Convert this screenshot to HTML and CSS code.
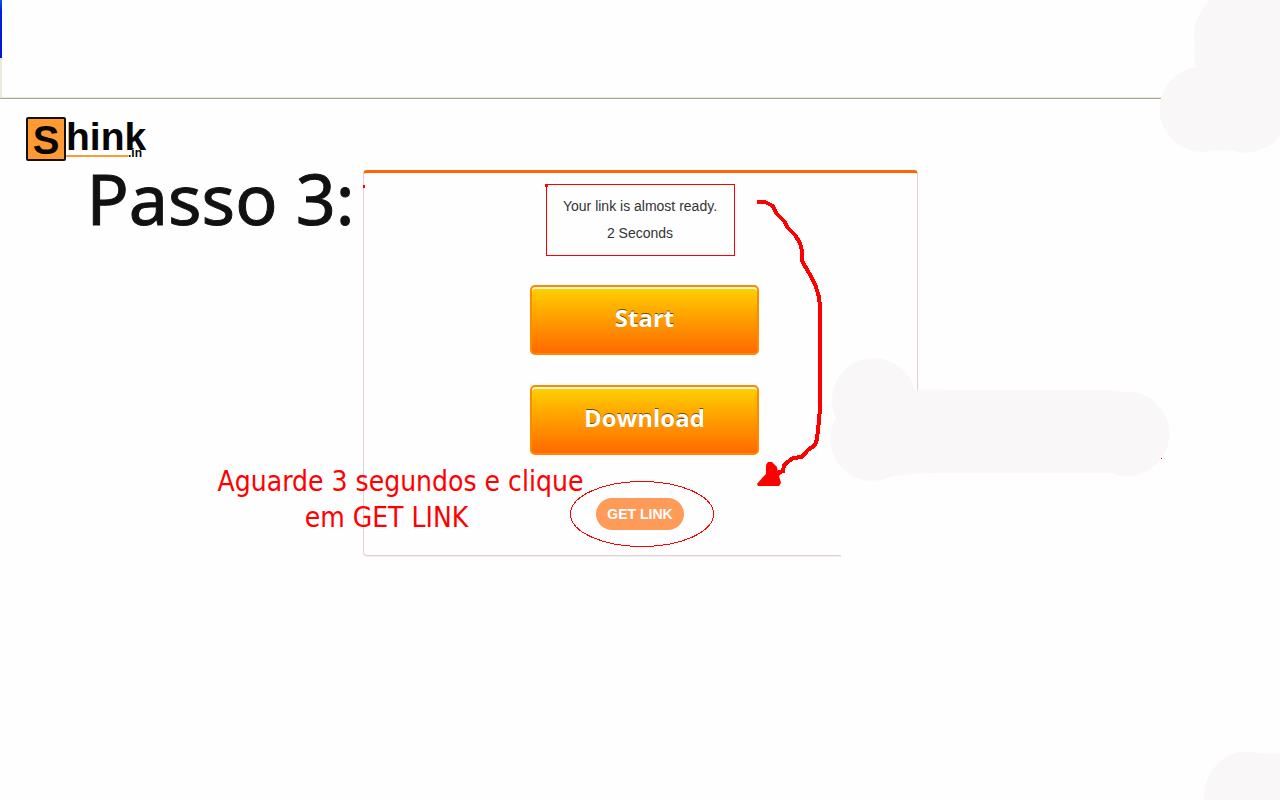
FILE: index.html
```html
<!DOCTYPE html>
<html lang="pt">
<head>
<meta charset="utf-8">
<title>Shink.in</title>
<link rel="stylesheet" href="styles.css">
</head>
<body>
<header class="topbar">
  <svg class="smudge-top" width="120" height="156" viewBox="0 0 120 156" aria-hidden="true">
    <path d="M50 0Q34 17 34 36Q36 47 34 52Q34 62 37 67A42 42 0 0 0 47 151.500Q66 149 74 151A42 42 0 0 0 120 135V0Z"/>
  </svg>
</header>
<a class="logo" href="#" aria-label="Shink.in">
  <span class="logo-s">S</span>
  <span class="logo-rest">
    <span class="logo-name">hink</span>
    <span class="logo-tld">.in</span>
  </span>
</a>
<main class="layout">
  <h1 class="step">Passo 3:</h1>
  <section class="panel">
    <div class="notice">
      <p>Your link is almost ready.</p>
      <p>2 Seconds</p>
    </div>
    <div class="actions">
      <button class="big" type="button">Start</button>
      <button class="big" type="button">Download</button>
    </div>
    <button class="get" type="button">GET LINK</button>
    <svg class="marks" width="810" height="390" viewBox="363 170 810 390" aria-hidden="true">
      <path class="erase" d="M841 440H925V560H841Z"/>
      <path class="smudge" d="M836 418A42 42 0 1 1 915 391Q930 388 945 390H1110Q1117 390 1124 392A42 42 0 1 1 1112 473H945Q910 473 890 477A42 42 0 0 1 836 418Z"/>
      <path class="dot" d="M1161 458h1v1h-1zM545 184h3v3h-3zM363 185h2v3h-2z"/>
      <path class="stroke" d="M757 202L765 202L773 206L776 213L784 221L788 228L795 235L800 243L802 251L802 261L809 273L815 284L819 297L820 306V408L819 421L817 439L815 445L808 450L802 457L793 458L784 465L783 471L777 473"/>
      <path class="dot" d="M757 484L763 477L766 474L766 465L768 462H772L777 467L778 473L784 471L779 476L781 483L779 486H758Z"/>
      <ellipse class="ring" cx="642" cy="514" rx="71.500" ry="32.500"/>
    </svg>
    <p class="hint">Aguarde 3 segundos e clique<span class="hint-end">em GET LINK</span></p>
  </section>
</main>
<svg class="smudge-bottom" width="76" height="48" viewBox="0 0 76 48" aria-hidden="true">
  <path d="M0 48A42 46 0 0 1 52 1L76 2V48Z"/>
</svg>
</body>
</html>
```
FILE: styles.css
```css
* { box-sizing: border-box; }
body {
  position: relative;
  min-height: 100vh;
  margin: 0;
  overflow-x: hidden;
  background: #fefefe;
  font-family: "Liberation Sans", Arial, sans-serif;
  color: #333;
}
p, h1 { margin: 0; }
.topbar {
  position: relative;
  height: 99px;
  border-bottom: 1px solid #aca899;
  box-shadow: inset 0 -1px #ece9d8;
}
.topbar::before {
  content: "";
  display: block;
  width: 2px;
  height: 98px;
  background: linear-gradient(#0058e6, #0020e0 12px, #0018d0 58px, #ece9d8 58px);
}
.smudge-top { position: absolute; top: 0; right: 0; fill: #f9f7f8; }
.smudge-bottom { position: absolute; right: 0; bottom: 0; fill: #f9f7f8; }
.logo {
  display: flex;
  width: 122px;
  height: 44px;
  margin: 18px 0 0 26px;
  color: #050505;
  font-weight: bold;
  text-decoration: none;
}
.logo-s {
  width: 40px;
  height: 44px;
  border: 2px solid #111;
  border-radius: 2px;
  background: #ff9a33;
  font-size: 40px;
  line-height: 43px;
  text-align: center;
}
.logo-rest {
  display: flex;
  flex-direction: column;
  width: 80px;
}
.logo-name {
  height: 30px;
  padding-top: 5px;
  font-size: 39px;
  line-height: 30px;
}
.logo-tld {
  display: flex;
  align-items: flex-end;
  height: 12px;
  font-size: 12px;
  line-height: 12px;
}
.logo-tld::before {
  content: "";
  width: 62px;
  height: 2px;
  margin-bottom: 2px;
  background: #ff9a33;
}
.layout {
  display: grid;
  grid-template-columns: 1fr 555px 1fr;
  margin-top: 9px;
}
.step {
  padding-right: 8px;
  color: #111;
  font: 400 70px/56px "Comic Sans MS", "Noto Sans", sans-serif;
  text-align: right;
  white-space: nowrap;
  -webkit-text-stroke: 1px #111;
}
.panel {
  position: relative;
  display: flex;
  flex-direction: column;
  align-items: center;
  padding: 11px 0 25px;
  border: 1px solid #e9cdd4;
  border-top: 3px solid #ff6600;
  border-radius: 4px;
  box-shadow: 0 1px 1px #eee;
}
.notice {
  min-width: 189px;
  padding: 8px 16px;
  border: 1px solid #f00;
  font-size: 14px;
  line-height: 27px;
  text-align: center;
  white-space: nowrap;
}
.actions {
  display: grid;
  gap: 30px;
  margin: 29px 0 43px;
  padding-left: 9px;
}
.big {
  width: 229px;
  height: 70px;
  padding: 0 0 4px;
  border: 2px solid #ff8a00;
  border-radius: 5px;
  background: linear-gradient(#ffd200, #ff9c00 50%, #ff6a00);
  box-shadow: inset 0 2px #fff7dc;
  color: #fff;
  font: bold 24px/30px "Open Sans", "Noto Sans", sans-serif;
  text-shadow: 0 -1px #7a4a00;
}
.get {
  width: 88px;
  height: 32px;
  padding: 0;
  border: 0;
  border-radius: 16px;
  background: #ff9b59;
  color: #fff;
  font: bold 14px/32px "Liberation Sans", Arial, sans-serif;
  white-space: nowrap;
}
.marks {
  position: absolute;
  top: -3px;
  left: -1px;
  pointer-events: none;
}
.erase { fill: #fefefe; }
.smudge { fill: #f9f7f8; }
.dot { fill: #f00; }
.stroke { fill: none; stroke: #f00; stroke-width: 4; shape-rendering: crispEdges; }
.ring { fill: none; stroke: #f00; shape-rendering: crispEdges; }
.hint {
  position: absolute;
  top: 291px;
  left: -146px;
  color: #f00;
  font: 28px/36px Tahoma, "DejaVu Sans Condensed", "Noto Sans", sans-serif;
  text-align: center;
  white-space: nowrap;
}
.hint-end {
  display: block;
  padding-right: 28px;
}
```
